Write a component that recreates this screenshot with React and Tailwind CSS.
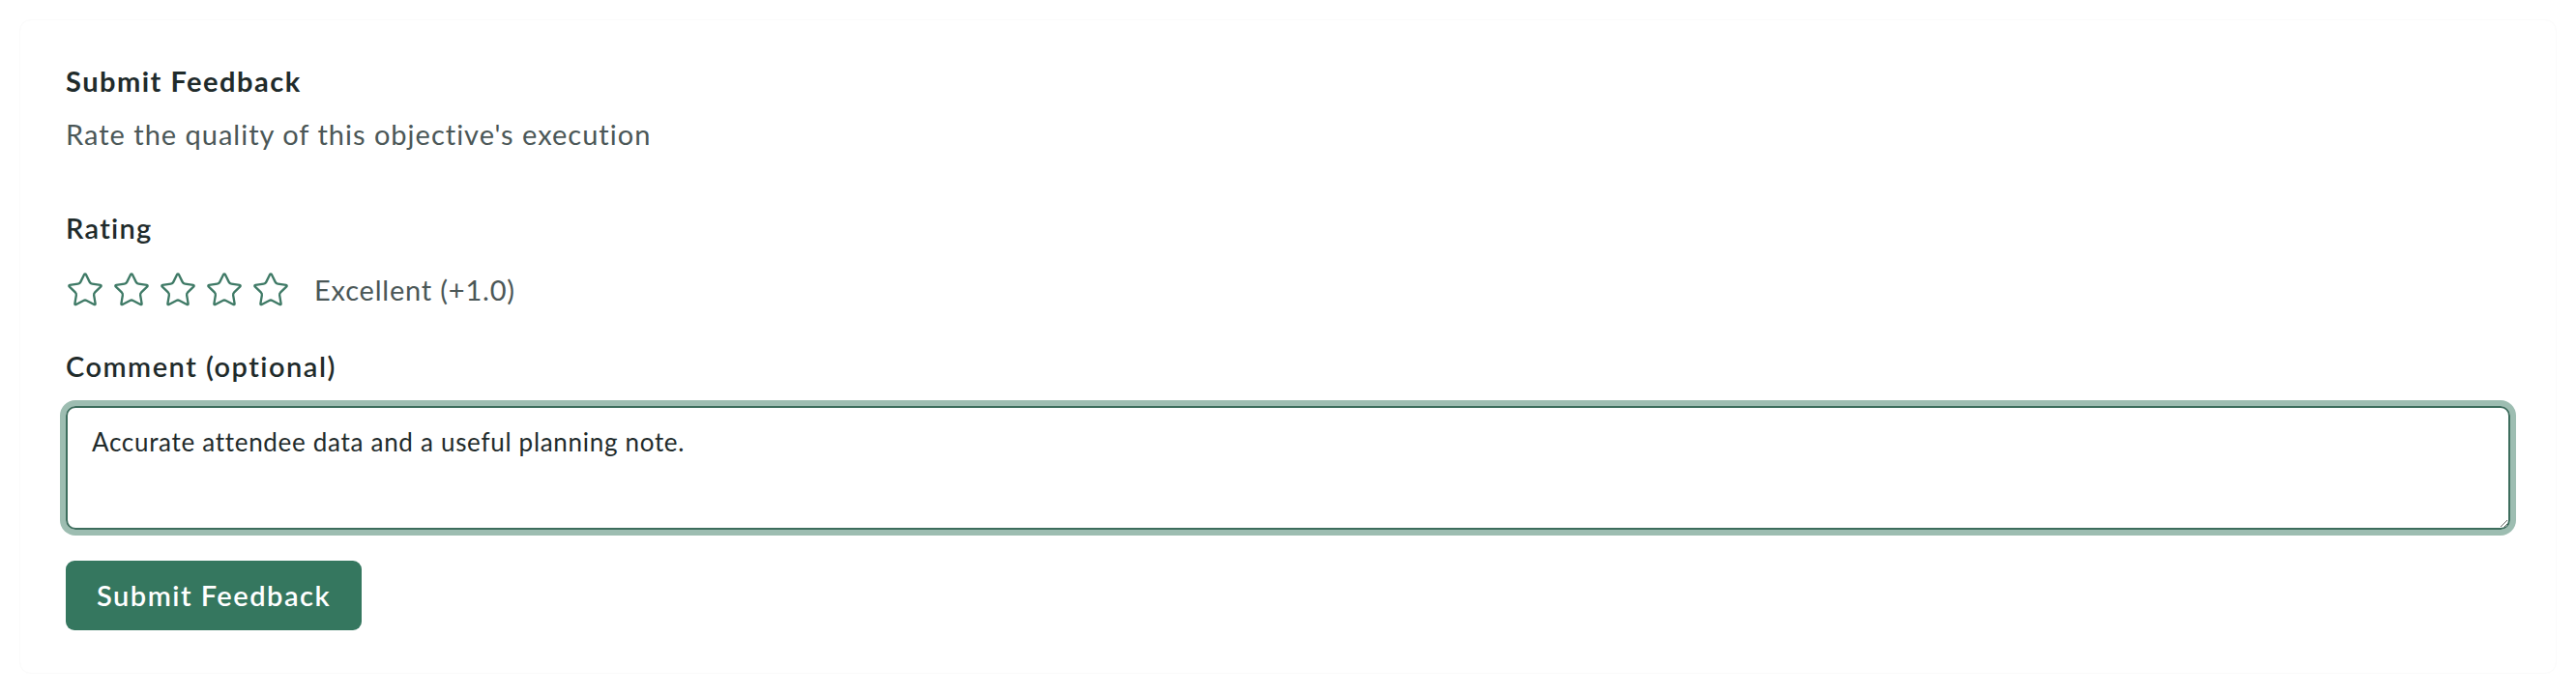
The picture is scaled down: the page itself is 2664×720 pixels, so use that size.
import React, { useEffect, useRef } from "react";

function Star() {
  return (
    <svg width="40" height="40" viewBox="0 0 24 24" fill="none" stroke="#3f7a66" strokeWidth="1.4" strokeLinecap="round" strokeLinejoin="round">
      <path d="M11.525 2.295a.53.53 0 0 1 .95 0l2.31 4.679a2.123 2.123 0 0 0 1.595 1.16l5.166.756a.53.53 0 0 1 .294.904l-3.736 3.638a2.123 2.123 0 0 0-.611 1.878l.882 5.14a.53.53 0 0 1-.771.56l-4.618-2.428a2.122 2.122 0 0 0-1.973 0L6.396 21.01a.53.53 0 0 1-.77-.56l.881-5.139a2.122 2.122 0 0 0-.611-1.879L2.16 9.795a.53.53 0 0 1 .294-.906l5.165-.755a2.122 2.122 0 0 0 1.597-1.16z" />
    </svg>
  );
}

export default function App() {
  const ref = useRef(null);
  useEffect(() => {
    const el = ref.current;
    if (el) {
      el.focus();
      const n = el.value.length;
      el.setSelectionRange(n, n);
    }
  }, []);
  return (
    <div className="min-h-[720px] bg-white pt-[20px] px-[20px]" style={{ fontFamily: "Lato, 'Noto Sans', sans-serif" }}>
      <div className="w-[2624px] rounded-[12px] border border-[#fafafa] pt-[43px] pb-[44px] px-[47px]">
        <div className="text-[29px] leading-[40px] font-bold tracking-[1.5px] text-[#1f2b2b]">Submit Feedback</div>
        <div className="mt-[15px] text-[29px] leading-[40px] tracking-[1px] text-[#4b5757]">Rate the quality of this objective's execution</div>
        <div className="mt-[57px] text-[29px] leading-[40px] font-semibold tracking-[1.3px] text-[#1f2b2b]">Rating</div>
        <div className="mt-[24px] flex items-center h-[40px]">
          <div className="flex items-center gap-[8px]">
            <Star />
            <Star />
            <Star />
            <Star />
            <Star />
          </div>
          <span className="ml-[25px] text-[29px] leading-[40px] tracking-[0.8px] text-[#4b5757]">Excellent (+1.0)</span>
        </div>
        <div className="mt-[39px] text-[29px] leading-[40px] font-semibold tracking-[1.5px] text-[#1f2b2b]">Comment (optional)</div>
        <textarea
          ref={ref}
          defaultValue="Accurate attendee data and a useful planning note."
          className="mt-[21px] block w-full h-[128px] rounded-[10px] border-2 border-[#3d6d5d] px-[25px] pt-[17px] pb-[8px] text-[26px] leading-[36px] tracking-[0.7px] text-[#1f2b2b] outline-none shadow-[0_0_0_6px_#9dbdb1] resize-y caret-[#1f2b2b]"
          style={{ fontFamily: "Lato, 'Noto Sans', sans-serif" }}
        />
        <button className="mt-[32px] h-[72px] px-[32px] rounded-[9px] bg-[#35775f] text-white text-[29px] font-semibold tracking-[1.5px] leading-[40px]">
          Submit Feedback
        </button>
      </div>
    </div>
  );
}
